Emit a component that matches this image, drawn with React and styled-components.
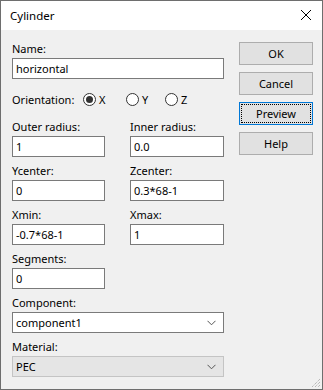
import * as React from 'react';
import styled, { createGlobalStyle } from 'styled-components';

const GlobalStyle = createGlobalStyle`
  html, body {
    margin: 0;
    padding: 0;
    background: #ffffff;
  }
  * {
    box-sizing: border-box;
  }
`;

const Window = styled.div`
  width: 323px;
  height: 390px;
  display: flex;
  flex-direction: column;
  border: 1px solid #6e6e6e;
  background: #f0f0f0;
  font-family: 'Noto Sans', 'Open Sans', sans-serif;
  font-size: 11px;
  color: #000;
  position: relative;
`;

const TitleBar = styled.div`
  height: 29px;
  flex: none;
  display: flex;
  align-items: center;
  justify-content: space-between;
  background: #ffffff;
  padding: 0 10px 1px 9px;
  font-size: 11.5px;
`;

const CloseIcon = styled.svg`
  width: 10px;
  height: 10px;
  margin-right: 1px;
`;

const Body = styled.div`
  flex: 1;
  display: flex;
  padding: 11px 0 0 11px;
`;

const Form = styled.div`
  width: 212px;
  display: flex;
  flex-direction: column;
`;

const Field = styled.div`
  display: flex;
  flex-direction: column;
  margin-top: ${(p) => p.$top || 0}px;
`;

const Label = styled.div`
  height: 15px;
  line-height: 15px;
  white-space: nowrap;
`;

const Input = styled.div`
  margin-top: 2px;
  height: 21px;
  line-height: 19px;
  padding: 0 3px;
  border: 1px solid #7a7a7a;
  background: #ffffff;
  white-space: nowrap;
  overflow: hidden;
`;

const Select = styled(Input)`
  display: flex;
  align-items: center;
  justify-content: space-between;
  padding-right: 7px;
  background: ${(p) => (p.$disabled ? '#e5e5e5' : '#ffffff')};
  border-color: ${(p) => (p.$disabled ? '#c4c4c4' : '#7a7a7a')};
`;

const Chevron = styled.svg`
  width: 9px;
  height: 6px;
`;

const RadioRow = styled.div`
  height: 16px;
  margin-top: 12px;
  display: flex;
  align-items: center;
`;

const RadioLabel = styled.div`
  width: 71px;
`;

const RadioItem = styled.div`
  width: ${(p) => p.$w}px;
  display: flex;
  align-items: center;
  gap: 3px;
`;

const RadioCircle = styled.span`
  width: 13px;
  height: 13px;
  border-radius: 50%;
  border: 1px solid #333333;
  background: #ffffff;
  display: flex;
  align-items: center;
  justify-content: center;
  &::after {
    content: '';
    width: 7px;
    height: 7px;
    border-radius: 50%;
    background: ${(p) => (p.$checked ? '#333333' : 'transparent')};
  }
`;

const Grid = styled.div`
  display: grid;
  grid-template-columns: 93px 94px;
  column-gap: 25px;
  row-gap: 6px;
  margin-top: 12px;
`;

const Buttons = styled.div`
  margin-left: 15px;
  padding-top: 1px;
  display: flex;
  flex-direction: column;
  gap: 7px;
`;

const Button = styled.div`
  width: 74px;
  height: 23px;
  display: flex;
  align-items: center;
  justify-content: center;
  background: #e1e1e1;
  border: 1px solid ${(p) => (p.$focused ? '#0078d7' : '#adadad')};
  position: relative;
  &::after {
    content: '';
    display: ${(p) => (p.$focused ? 'block' : 'none')};
    position: absolute;
    inset: 1px;
    border: 1px dotted #000;
  }
`;

const Grip = styled.svg`
  position: absolute;
  right: 1px;
  bottom: 1px;
  width: 11px;
  height: 11px;
`;

const NumField = ({ label, value }) => (
  <Field>
    <Label>{label}</Label>
    <Input>{value}</Input>
  </Field>
);

const Radio = ({ label, checked, w }) => (
  <RadioItem $w={w}>
    <RadioCircle $checked={checked} />
    <span>{label}</span>
  </RadioItem>
);

const Dropdown = ({ value, disabled }) => (
  <Select $disabled={disabled}>
    <span>{value}</span>
    <Chevron viewBox="0 0 9 6">
      <path d="M0.5 0.8 L4.5 4.8 L8.5 0.8" fill="none" stroke="#555" strokeWidth="1" />
    </Chevron>
  </Select>
);

const App = () => (
  <>
    <GlobalStyle />
    <Window>
      <TitleBar>
        <span>Cylinder</span>
        <CloseIcon viewBox="0 0 10 10">
          <path d="M0 0 L10 10 M10 0 L0 10" stroke="#000" strokeWidth="1" />
        </CloseIcon>
      </TitleBar>
      <Body>
        <Form>
          <Field>
            <Label>Name:</Label>
            <Input>horizontal</Input>
          </Field>
          <RadioRow>
            <RadioLabel>Orientation:</RadioLabel>
            <Radio label="X" checked w={43} />
            <Radio label="Y" w={39} />
            <Radio label="Z" />
          </RadioRow>
          <Grid>
            <NumField label="Outer radius:" value="1" />
            <NumField label="Inner radius:" value="0.0" />
            <NumField label="Ycenter:" value="0" />
            <NumField label="Zcenter:" value="0.3*68-1" />
            <NumField label="Xmin:" value="-0.7*68-1" />
            <NumField label="Xmax:" value="1" />
            <NumField label="Segments:" value="0" />
          </Grid>
          <Field $top={6}>
            <Label>Component:</Label>
            <Dropdown value="component1" />
          </Field>
          <Field $top={6}>
            <Label>Material:</Label>
            <Dropdown value="PEC" disabled />
          </Field>
        </Form>
        <Buttons>
          <Button>OK</Button>
          <Button>Cancel</Button>
          <Button $focused>Preview</Button>
          <Button>Help</Button>
        </Buttons>
      </Body>
      <Grip viewBox="0 0 11 11">
        <path d="M10 2 L2 10 M10 5 L5 10 M10 8 L8 10" stroke="#a0a0a0" strokeWidth="1" strokeDasharray="1 1" />
      </Grip>
    </Window>
  </>
);

export default App;
